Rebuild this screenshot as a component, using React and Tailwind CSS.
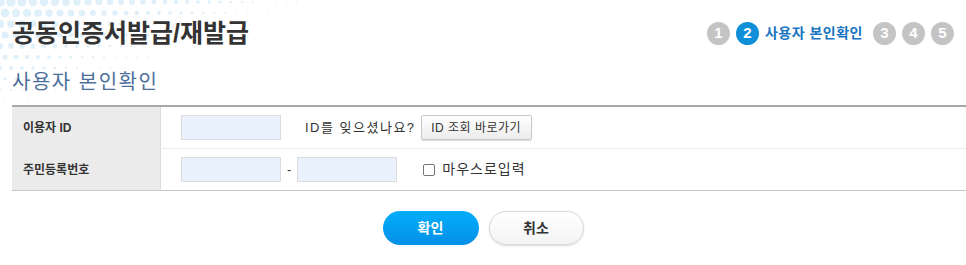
import React from 'react';

const font = { fontFamily: '"Liberation Sans", "Noto Sans CJK KR", sans-serif' };

// faint dotted decoration in the top-left corner
const Dots = () => {
  const dots = [];
  for (let row = 0; row < 10; row++) {
    for (let col = 0; col < 30; col++) {
      const x = col * 11 + (row % 2 ? 5 : 0);
      const y = row * 11 + 2;
      const fade = 1 - x / 320 - y / 120;
      if (fade <= 0.05) continue;
      const r = Math.max(0.8, 5 * fade);
      dots.push(<circle key={`${row}-${col}`} cx={x} cy={y} r={r} fill="#dff0fb" />);
    }
  }
  return (
    <svg className="absolute left-0 top-0 pointer-events-none" width="330" height="115">
      {dots}
    </svg>
  );
};

const Step = ({ n, active }) => (
  <span
    className={`flex h-[23px] w-[23px] items-center justify-center rounded-full text-[15px] font-bold text-white ${
      active ? 'bg-[#0e8fd8]' : 'bg-[#c4c4c4]'
    }`}
  >
    {n}
  </span>
);

export default function App() {
  return (
    <div className="relative h-[265px] w-[966px] overflow-hidden bg-white text-[#333]" style={font}>
      <Dots />
      <div className="relative">
        {/* header */}
        <div className="flex items-center justify-between pl-3 pr-3 pt-[18px]">
          <h1 className="text-[25px] font-bold leading-[30px] text-[#333]">공동인증서발급/재발급</h1>
          <div className="flex items-center gap-[6px]">
            <Step n="1" />
            <Step n="2" active />
            <span className="mr-[4px] text-[14px] font-bold tracking-[0.5px] text-[#1a76c2]">사용자 본인확인</span>
            <Step n="3" />
            <Step n="4" />
            <Step n="5" />
          </div>
        </div>

        <h2 className="mt-[23px] pl-3 text-[20px] leading-[22px] tracking-[1.5px] text-[#4d6f9c]">사용자 본인확인</h2>

        {/* form table */}
        <div className="ml-3 mt-[12px] border-t-2 border-b border-t-[#a8a8a8] border-b-[#c8c8c8]">
          <div className="flex h-[42px] border-b border-[#ececec]">
            <div className="flex w-[149px] items-center border-r border-[#dcdcdc] bg-[#ebebeb] pl-[11px] text-[12px] font-bold">
              이용자 ID
            </div>
            <div className="flex items-center pl-5">
              <input className="h-[25px] w-[100px] border border-[#dcdcdc] bg-[#e8f1fc] outline-none" />
              <span className="ml-6 text-[13px] tracking-[1.5px]">ID를 잊으셨나요?</span>
              <button className="ml-[5px] h-[25px] w-[111px] rounded-[2px] border border-[#c9c9c9] bg-gradient-to-b from-white to-[#ececec] text-[12px] tracking-[0.5px] text-[#333] shadow-[0_1px_1px_rgba(0,0,0,0.15)]">
                ID 조회 바로가기
              </button>
            </div>
          </div>
          <div className="flex h-[41px]">
            <div className="flex w-[149px] items-center border-r border-[#dcdcdc] bg-[#ebebeb] pl-[11px] text-[12px] font-bold">
              주민등록번호
            </div>
            <div className="flex items-center pl-5">
              <input className="h-[25px] w-[100px] border border-[#dcdcdc] bg-[#e8f1fc] outline-none" />
              <span className="mx-[6px] text-[13px]">-</span>
              <input className="h-[25px] w-[100px] border border-[#dcdcdc] bg-[#e8f1fc] outline-none" />
              <span className="ml-[26px] h-[12px] w-[12px] rounded-[2px] border border-[#777] bg-white" />
              <span className="ml-[7px] text-[14px] tracking-[1px]">마우스로입력</span>
            </div>
          </div>
        </div>

        {/* buttons */}
        <div className="mt-[20px] flex justify-center gap-[10px]">
          <button className="h-[34px] w-[96px] rounded-full bg-gradient-to-b from-[#03aefc] to-[#0590e6] text-[14px] font-bold text-white">
            확인
          </button>
          <button className="h-[34px] w-[95px] rounded-full border border-[#d8d8d8] bg-gradient-to-b from-white to-[#f4f4f4] text-[14px] font-bold text-[#333] shadow-[0_1px_2px_rgba(0,0,0,0.15)]">
            취소
          </button>
        </div>
      </div>
    </div>
  );
}
